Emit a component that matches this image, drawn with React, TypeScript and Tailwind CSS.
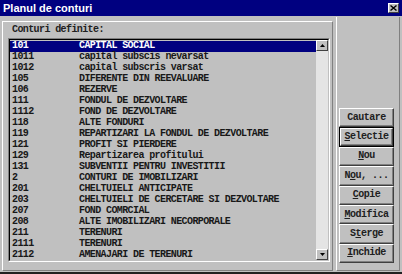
import React from 'react';

const rows: [string, string][] = [
  ['101', 'CAPITAL SOCIAL'],
  ['1011', 'capital subscis nevarsat'],
  ['1012', 'capital subscris varsat'],
  ['105', 'DIFERENTE DIN REEVALUARE'],
  ['106', 'REZERVE'],
  ['111', 'FONDUL DE DEZVOLTARE'],
  ['1112', 'FOND DE DEZVOLTARE'],
  ['118', 'ALTE FONDURI'],
  ['119', 'REPARTIZARI LA FONDUL DE DEZVOLTARE'],
  ['121', 'PROFIT SI PIERDERE'],
  ['129', 'Repartizarea profitului'],
  ['131', 'SUBVENTII PENTRU INVESTITII'],
  ['2', 'CONTURI DE IMOBILIZARI'],
  ['201', 'CHELTUIELI ANTICIPATE'],
  ['203', 'CHELTUIELI DE CERCETARE SI DEZVOLTARE'],
  ['207', 'FOND COMRCIAL'],
  ['208', 'ALTE IMOBILIZARI NECORPORALE'],
  ['211', 'TERENURI'],
  ['2111', 'TERENURI'],
  ['2112', 'AMENAJARI DE TERENURI'],
];

// label, index of underlined letter (-1 = none)
const buttons: [string, number][] = [
  ['Cautare', -1],
  ['Selectie', 0],
  ['Nou', 0],
  ['Nou, ...', 1],
  ['Copie', 0],
  ['Modifica', 0],
  ['Sterge', 1],
  ['Inchide', 0],
];

function Btn({ label, u, focus }: { label: string; u: number; focus?: boolean }) {
  return (
    <div className={`h-[19.4px] ${focus ? 'border border-black' : ''}`}>
      <div className="h-full flex items-center justify-center border border-t-white border-l-white border-r-[#404040] border-b-[#404040] bg-[#c0c0c0] shadow-[inset_-1px_-1px_0_#808080]">
        <span className="text-[10px] tracking-[-0.5px] font-bold leading-none text-[#202020]">
          {label.split('').map((ch, i) => (
            <span key={i} className={i === u ? 'underline underline-offset-1' : ''}>
              {ch === ' ' ? '\u00a0' : ch}
            </span>
          ))}
        </span>
      </div>
    </div>
  );
}

function Arrow({ up }: { up?: boolean }) {
  return (
    <div className="w-full h-[11px] flex items-center justify-center bg-[#c0c0c0] border border-t-white border-l-white border-r-[#404040] border-b-[#404040]">
      <svg width="5" height="3" viewBox="0 0 5 3">
        <path d={up ? 'M2.5 0 L5 3 L0 3 Z' : 'M0 0 L5 0 L2.5 3 Z'} fill="#000" />
      </svg>
    </div>
  );
}

export default function App() {
  return (
    <div
      className="w-[402px] h-[274px] bg-[#c0c0c0] flex flex-col border-b-2 border-b-[#202020] overflow-hidden"
      style={{ fontFamily: '"Liberation Mono", monospace' }}
    >
      {/* Title bar */}
      <div className="h-[16px] bg-[#000080] flex items-center justify-between pl-[3px] pr-[3px] shrink-0">
        <span
          className="text-white text-[11px] font-bold leading-none"
          style={{ fontFamily: '"Liberation Sans", Arial, sans-serif' }}
        >
          Planul de conturi
        </span>
        <div className="w-[11px] h-[10px] bg-[#c0c0c0] border border-t-white border-l-white border-r-[#404040] border-b-[#404040] flex items-center justify-center">
          <svg width="7" height="6" viewBox="0 0 7 6">
            <path d="M0.5 0.5 L6.5 5.5 M6.5 0.5 L0.5 5.5" stroke="#000" strokeWidth="1.4" />
          </svg>
        </div>
      </div>

      <div className="flex-1 flex pl-[2px] pr-[2px] pb-[1px]">
        {/* Left panel */}
        <div className="w-[331px] mt-[5px] border border-t-white border-l-white border-r-[#808080] border-b-[#808080] flex flex-col pl-[5px]">
          <div className="h-[16px] flex items-center pl-[4px] text-[10px] tracking-[-0.6px] font-bold text-[#202020] leading-none">
            Conturi definite:
          </div>
          <div className="w-[322px] h-[224px] border border-t-[#808080] border-l-[#808080] border-r-white border-b-white">
            <div className="w-full h-full border border-t-black border-l-black border-r-[#c0c0c0] border-b-[#c0c0c0] flex">
              <div className="flex-1 flex flex-col pt-px overflow-hidden">
                {rows.map(([code, name], i) => (
                  <div
                    key={i}
                    className={`h-[11px] flex items-center text-[10px] tracking-[-0.6px] font-bold leading-none whitespace-nowrap ${
                      i === 0 ? 'bg-[#000080] text-white' : 'text-[#181818]'
                    }`}
                  >
                    <span className="w-[69px] pl-[2px] shrink-0">{code}</span>
                    <span className="whitespace-pre">{name}</span>
                  </div>
                ))}
              </div>
              <div className="w-[12px] flex flex-col bg-[#e4e4e4]">
                <Arrow up />
                <div className="flex-1" />
                <Arrow />
              </div>
            </div>
          </div>
        </div>

        {/* Right panel */}
        <div className="ml-[3px] flex-1 mt-px border-l border-l-white border-r border-r-[#808080] border-b border-b-[#808080] flex flex-col pt-[91px] pl-[2px] pr-[5px]">
          <div className="flex flex-col">
            {buttons.map(([label, u], i) => (
              <Btn key={i} label={label} u={u} focus={i === 1} />
            ))}
          </div>
        </div>
      </div>
    </div>
  );
}
